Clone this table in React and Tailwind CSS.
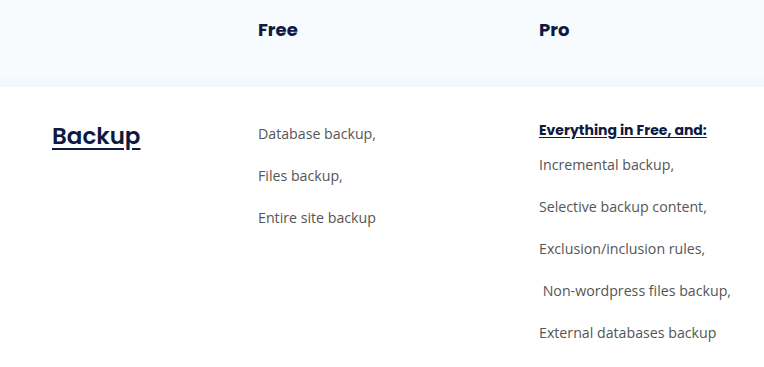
const heading = { fontFamily: "Poppins, Inter, 'Noto Sans', sans-serif" };
const body = { fontFamily: "'Open Sans', 'Noto Sans', sans-serif" };

const free = ["Database backup,", "Files backup,", "Entire site backup"];
const pro = [
  "Incremental backup,",
  "Selective backup content,",
  "Exclusion/inclusion rules,",
  "\u00a0Non-wordpress files backup,",
  "External databases backup",
];

export default function App() {
  return (
    <div className="w-[764px] h-[367px] bg-white overflow-hidden">
      <div
        className="h-[87px] bg-linear-to-b from-[#f7fbfe] from-85% to-[#f1f7fc] grid grid-cols-[258px_281px_1fr] pt-[16px]"
        style={heading}
      >
        <div />
        <div className="text-[18px] font-bold text-[#0e1a3f]">Free</div>
        <div className="text-[18px] font-bold text-[#0e1a3f]">Pro</div>
      </div>

      <div className="grid grid-cols-[206px_281px_1fr] pl-[52px] pt-[33px]">
        <div className="pt-[5px]">
          <a
            href="#"
            className="text-[23px] font-semibold text-[#0e1a3f] underline underline-offset-[4px] decoration-[1.5px] leading-none"
            style={heading}
          >
            Backup
          </a>
        </div>

        <div className="flex flex-col gap-[21px] pt-[3px]" style={body}>
          {free.map((t) => (
            <p key={t} className="text-[14.2px] leading-[21px] text-[#555]">
              {t}
            </p>
          ))}
        </div>

        <div className="flex flex-col" style={body}>
          <a
            href="#"
            className="text-[14px] font-bold text-[#0e1a3f] underline underline-offset-[2px] leading-[20px] mb-[14px]"
            style={heading}
          >
            Everything in Free, and:
          </a>
          <div className="flex flex-col gap-[21px]">
            {pro.map((t) => (
              <p key={t} className="text-[14.2px] leading-[21px] text-[#555] whitespace-pre">
                {t}
              </p>
            ))}
          </div>
        </div>
      </div>
    </div>
  );
}
